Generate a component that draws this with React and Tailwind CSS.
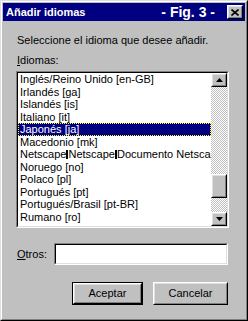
import React from 'react';

const idiomas = [
  'Inglés/Reino Unido [en-GB]',
  'Irlandés [ga]',
  'Islandés [is]',
  'Italiano [it]',
  'Japonés [ja]',
  'Macedonio [mk]',
  'NETSCAPE',
  'Noruego [no]',
  'Polaco [pl]',
  'Portugués [pt]',
  'Portugués/Brasil [pt-BR]',
  'Rumano [ro]',
];

const Raised = ({ className = '', children }) => (
  <div className={`border border-t-white border-l-white border-r-black border-b-black ${className}`}>
    <div className="w-full h-full border border-t-[#dfdfdf] border-l-[#dfdfdf] border-r-[#808080] border-b-[#808080] bg-[#c0c0c0] flex items-center justify-center">
      {children}
    </div>
  </div>
);

const Sunken = ({ className = '', children }) => (
  <div className={`border border-t-[#808080] border-l-[#808080] border-r-white border-b-white ${className}`}>
    <div className="w-full h-full border border-t-black border-l-black border-r-[#dfdfdf] border-b-[#dfdfdf] bg-white flex">
      {children}
    </div>
  </div>
);

const Bar = () => <span className="inline-block w-[2px] h-[9px] bg-black align-[-1px]" />;

const ScrollBar = () => (
  <div className="w-[16px] h-full flex flex-col shrink-0">
    <Raised className="h-[14px] w-[16px]">
      <svg width="7" height="4" viewBox="0 0 7 4"><path d="M3.5 0L7 4H0z" fill="#000" /></svg>
    </Raised>
    <div className="h-[87px] bg-[image:repeating-conic-gradient(#ffffff_0_25%,#c0c0c0_0_50%)] bg-[length:2px_2px]" />
    <Raised className="h-[24px] w-[16px]" />
    <div className="flex-1 bg-[image:repeating-conic-gradient(#ffffff_0_25%,#c0c0c0_0_50%)] bg-[length:2px_2px]" />
    <Raised className="h-[14px] w-[16px]">
      <svg width="7" height="4" viewBox="0 0 7 4"><path d="M0 0H7L3.5 4z" fill="#000" /></svg>
    </Raised>
  </div>
);

export default function App() {
  return (
    <div className="w-[248px] h-[321px] border border-t-[#dfdfdf] border-l-[#dfdfdf] border-r-black border-b-black font-['Liberation_Sans',Arial,sans-serif] text-[11px] text-black">
      <div className="w-full h-full border border-t-white border-l-white border-r-[#808080] border-b-[#808080] bg-[#c0c0c0] p-[1px] flex flex-col">
        <div className="h-[18px] bg-[#000080] flex items-center pl-[3px] text-white">
          <span className="font-bold text-[11px] leading-none">Añadir idiomas</span>
          <span className="ml-auto mr-[12px] font-bold text-[14px] leading-none">- Fig. 3 -</span>
          <Raised className="w-[16px] h-[14px] mr-[2px]">
            <svg width="8" height="7" viewBox="0 0 8 7">
              <path d="M0.5 0.5L7.5 6.5M7.5 0.5L0.5 6.5" stroke="#000" strokeWidth="1.6" />
            </svg>
          </Raised>
        </div>

        <div className="pl-[13px] pr-[16px] flex flex-col">
          <p className="mt-[13px] leading-[13px] pl-[1px]">Seleccione el idioma que desee añadir.</p>
          <p className="mt-[7px] leading-[13px] pl-[1px]"><span className="underline">I</span>diomas:</p>

          <Sunken className="mt-[4px] h-[157px] w-full">
            <ul className="flex-1 min-w-0 overflow-hidden">
              {idiomas.map((nombre, i) => (
                <li
                  key={nombre}
                  className={`h-[12.5px] leading-[12.5px] pl-[2px] whitespace-nowrap overflow-hidden ${i === 4 ? 'bg-[#000080] text-white outline-1 outline-dotted outline-[#ffff00] -outline-offset-1' : ''}`}
                >
                  {nombre === 'NETSCAPE' ? (
                    <>Netscape<Bar />Netscape<Bar />Documento Netscape</>
                  ) : nombre}
                </li>
              ))}
            </ul>
            <ScrollBar />
          </Sunken>

          <div className="mt-[15px] flex items-center mr-[1px]">
            <label className="w-[38px] pl-[1px] leading-[13px]"><span className="underline">O</span>tros:</label>
            <Sunken className="flex-1 h-[22px]" />
          </div>

          <div className="mt-[17px] flex justify-end gap-[10px] mr-[1px]">
            <div className="border border-black w-[71px] h-[23px]">
              <Raised className="w-full h-full">Aceptar</Raised>
            </div>
            <Raised className="w-[75px] h-[23px]">Cancelar</Raised>
          </div>
        </div>
      </div>
    </div>
  );
}
